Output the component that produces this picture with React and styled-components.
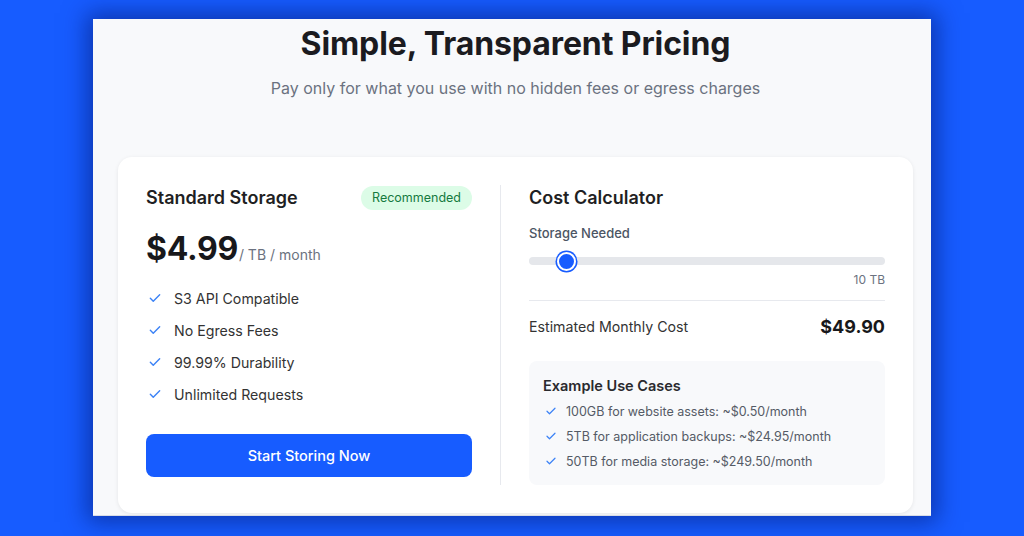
import React from 'react'
import styled, { createGlobalStyle } from 'styled-components'

const GlobalStyle = createGlobalStyle`
    html, body {
        margin: 0;
        padding: 0;
        height: 536px;
        overflow: hidden;
        background: #175cff;
        font-family: Inter, "Noto Sans", "Liberation Sans", sans-serif;
    }
    * { box-sizing: border-box; }
`

const Stage = styled.div`
    width: 1024px;
    height: 536px;
    padding: 19px 0 0 93px;
    background: #175cff;
`

const Frame = styled.div`
    width: 838px;
    height: 497px;
    background: #f8f9fb;
    overflow: hidden;
    border-bottom: 1px solid #d9dde6;
    box-shadow: 0 0 22px 6px rgba(4, 24, 110, 0.55);
    padding: 7px 18px 0 25px;
`

const Title = styled.h1`
    margin: 0;
    text-align: center;
    font-size: 32px;
    line-height: 36px;
    font-weight: 700;
    color: #1b1b1f;
    letter-spacing: -0.1px;
`

const Subtitle = styled.p`
    margin: 14px 0 0;
    text-align: center;
    font-size: 16px;
    line-height: 24px;
    color: #6b7280;
`

const Card = styled.div`
    margin-top: 57px;
    height: 356px;
    background: #fff;
    border-radius: 14px;
    box-shadow: 0 1px 4px rgba(0, 0, 0, 0.08);
    padding: 28px;
    display: grid;
    grid-template-columns: 355px 1fr;
`

const Column = styled.div`
    display: flex;
    flex-direction: column;
    ${p => p.divider && `
        border-right: 1px solid #e7e9ee;
        padding-right: 28px;
    `}
    ${p => p.right && `padding-left: 28px;`}
`

const HeadRow = styled.div`
    display: flex;
    align-items: center;
    justify-content: space-between;
    height: 26px;
`

const CardTitle = styled.h2`
    margin: 0;
    font-size: 18px;
    line-height: 26px;
    font-weight: 600;
    color: #1f1f23;
`

const Badge = styled.span`
    background: #dcfce7;
    color: #157a3e;
    font-size: 12.5px;
    line-height: 24px;
    height: 24px;
    padding: 0 11px;
    border-radius: 999px;
`

const PriceRow = styled.div`
    display: flex;
    align-items: baseline;
    margin-top: 18px;
`

const Price = styled.span`
    font-size: 32px;
    line-height: 40px;
    font-weight: 700;
    color: #18181b;
    letter-spacing: -0.3px;
`

const Per = styled.span`
    font-size: 14px;
    color: #6b7280;
    margin-left: 1px;
`

const FeatureList = styled.ul`
    list-style: none;
    margin: 18px 0 0;
    padding: 0;
    display: flex;
    flex-direction: column;
    gap: 10px;
`

const Feature = styled.li`
    display: flex;
    align-items: center;
    gap: 12px;
    height: 22px;
    padding-left: 2px;
    font-size: 14.2px;
    color: #333;
`

const Button = styled.button`
    margin-top: 29px;
    height: 43px;
    width: 100%;
    border: none;
    border-radius: 8px;
    background: #175cff;
    color: #fff;
    font-family: inherit;
    font-size: 14.5px;
    font-weight: 500;
    cursor: pointer;
`

const Label = styled.div`
    margin-top: 13px;
    font-size: 13px;
    line-height: 18px;
    font-weight: 500;
    color: #4b5563;
`

const Track = styled.div`
    position: relative;
    margin-top: 15px;
    height: 8px;
    border-radius: 4px;
    background: #e5e7eb;
`

const Thumb = styled.div`
    position: absolute;
    top: 50%;
    width: 19px;
    height: 19px;
    margin: -9.5px 0 0 -9.5px;
    border-radius: 50%;
    background: #175cff;
    border: 2px solid #fff;
    box-shadow: 0 0 0 1.5px #175cff;
`

const Value = styled.div`
    margin-top: 7px;
    text-align: right;
    font-size: 12px;
    line-height: 16px;
    color: #6b7280;
`

const Rule = styled.div`
    margin-top: 12px;
    height: 1px;
    background: #e7e9ee;
`

const CostRow = styled.div`
    display: flex;
    align-items: center;
    justify-content: space-between;
    margin-top: 13px;
    height: 24px;
`

const CostLabel = styled.span`
    font-size: 14.2px;
    color: #333;
`

const CostValue = styled.span`
    font-size: 18px;
    font-weight: 700;
    color: #18181b;
`

const Examples = styled.div`
    margin-top: 23px;
    background: #f8f9fb;
    border-radius: 8px;
    padding: 16px 14px 14px;
    height: 124px;
`

const ExTitle = styled.h3`
    margin: 0;
    font-size: 14.5px;
    line-height: 18px;
    font-weight: 600;
    color: #2a2a2e;
`

const ExList = styled.ul`
    list-style: none;
    margin: 7px 0 0;
    padding: 0;
    display: flex;
    flex-direction: column;
    gap: 7px;
`

const ExItem = styled.li`
    display: flex;
    align-items: center;
    gap: 9px;
    height: 18px;
    padding-left: 2px;
    font-size: 12.5px;
    color: #555b66;
`

function Check({ size = 14 }) {
    return (
        <svg width={size} height={size} viewBox="0 0 24 24" fill="none" stroke="#3b82f6" strokeWidth="2.4" strokeLinecap="round" strokeLinejoin="round">
            <path d="M4 12.5l5 5L20 6.5" />
        </svg>
    )
}

const features = ['S3 API Compatible', 'No Egress Fees', '99.99% Durability', 'Unlimited Requests']
const examples = [
    '100GB for website assets: ~$0.50/month',
    '5TB for application backups: ~$24.95/month',
    '50TB for media storage: ~$249.50/month',
]

export default function App() {
    const tb = 10
    const pos = (tb / 100) * 100 + 0.6
    return (
        <>
            <GlobalStyle />
            <Stage>
                <Frame>
                    <Title>Simple, Transparent Pricing</Title>
                    <Subtitle>Pay only for what you use with no hidden fees or egress charges</Subtitle>
                    <Card>
                        <Column divider>
                            <HeadRow>
                                <CardTitle>Standard Storage</CardTitle>
                                <Badge>Recommended</Badge>
                            </HeadRow>
                            <PriceRow>
                                <Price>$4.99</Price>
                                <Per>/ TB / month</Per>
                            </PriceRow>
                            <FeatureList>
                                {features.map(f => (
                                    <Feature key={f}><Check />{f}</Feature>
                                ))}
                            </FeatureList>
                            <Button>Start Storing Now</Button>
                        </Column>
                        <Column right>
                            <CardTitle>Cost Calculator</CardTitle>
                            <Label>Storage Needed</Label>
                            <Track>
                                <Thumb style={{ left: `${pos}%` }} />
                            </Track>
                            <Value>{tb} TB</Value>
                            <Rule />
                            <CostRow>
                                <CostLabel>Estimated Monthly Cost</CostLabel>
                                <CostValue>${(tb * 4.99).toFixed(2)}</CostValue>
                            </CostRow>
                            <Examples>
                                <ExTitle>Example Use Cases</ExTitle>
                                <ExList>
                                    {examples.map(e => (
                                        <ExItem key={e}><Check size={12} />{e}</ExItem>
                                    ))}
                                </ExList>
                            </Examples>
                        </Column>
                    </Card>
                </Frame>
            </Stage>
        </>
    )
}
